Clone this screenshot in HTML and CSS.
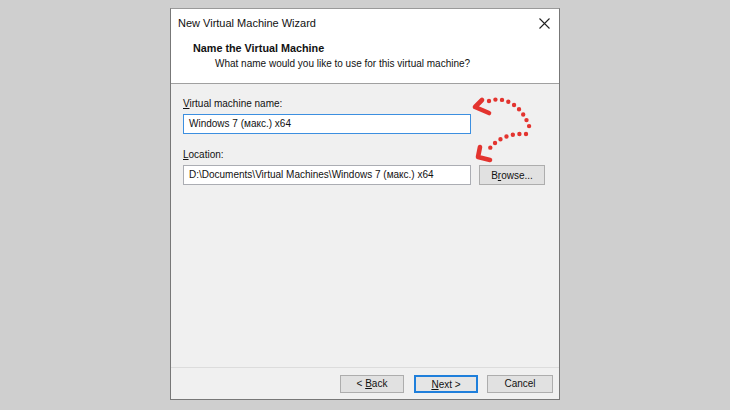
FILE: index.html
```html
<!DOCTYPE html>
<html lang="en">
<head>
  <meta charset="UTF-8" />
  <title>New Virtual Machine Wizard</title>
  <link rel="stylesheet" href="styles.css">
</head>
<body>
  <div class="dialog">
    <div class="titlebar">
      <span class="title">New Virtual Machine Wizard</span>
      <svg class="close" width="11" height="11" viewBox="0 0 11 11">
        <path d="M0.5 0.5 L10.5 10.5 M10.5 0.5 L0.5 10.5" stroke="#222" stroke-width="1.1" fill="none"/>
      </svg>
    </div>

    <div class="header">
      <div class="step">Name the Virtual Machine</div>
      <div class="step-sub">What name would you like to use for this virtual machine?</div>
    </div>

    <div class="content">
      <label class="field-label"><u>V</u>irtual machine name:</label>
      <div class="row">
        <div class="textbox focused">Windows 7 (макс.) x64</div>
      </div>

      <label class="field-label second"><u>L</u>ocation:</label>
      <div class="row">
        <div class="textbox">D:\Documents\Virtual Machines\Windows 7 (макс.) x64</div>
        <button class="btn browse">B<u>r</u>owse...</button>
      </div>

      <!-- red hint arrows pointing at both fields -->
      <svg class="hint" width="80" height="75" viewBox="0 0 80 75">
        <path d="M24 8 C 38 3, 58 10, 66 39" stroke="#e3342f" stroke-width="4.4" fill="none"
              stroke-linecap="round" stroke-dasharray="0 6.6"/>
        <path d="M61 41 C 48 40, 34 44, 25 55" stroke="#e3342f" stroke-width="4.4" fill="none"
              stroke-linecap="round" stroke-dasharray="0 6.6"/>
        <polyline points="17,7 10,14 24,20" stroke="#e3342f" stroke-width="4.6" fill="none"
                  stroke-linecap="round" stroke-linejoin="round"/>
        <polyline points="15,54 13,64 25,67" stroke="#e3342f" stroke-width="4.6" fill="none"
                  stroke-linecap="round" stroke-linejoin="round"/>
      </svg>
    </div>

    <div class="footer">
      <button class="btn">&lt; <u>B</u>ack</button>
      <button class="btn default"><u>N</u>ext &gt;</button>
      <button class="btn cancel">Cancel</button>
    </div>
  </div>
</body>
</html>
```

FILE: styles.css
```css
body {
  margin: 0;
  background: #cfcfcf;
  font-family: "Liberation Sans", Arial, sans-serif;
  font-size: 10px;
  color: #111;
}

.dialog {
  box-sizing: border-box;
  width: 390px;
  height: 392px;
  margin: 8px 0 0 170px;
  border: 1px solid #777;
  border-top-color: #9a9a9a;
  background: #f0f0f0;
  display: flex;
  flex-direction: column;
}

.titlebar {
  height: 28px;
  background: #fff;
  display: flex;
  align-items: center;
  justify-content: space-between;
  padding: 0 9px 0 7px;
}

.title {
  font-size: 11px;
  line-height: 15px;
}

.close {
  display: block;
  margin-top: 1px;
}

.header {
  height: 42px;
  background: #fff;
  border-bottom: 1px solid #a0a0a0;
  padding: 4px 0 0 22px;
}

.step {
  font-size: 10.8px;
  font-weight: bold;
  line-height: 15px;
}

.step-sub {
  line-height: 15px;
  padding-left: 22px;
}

.content {
  flex: 1;
  position: relative;
  padding: 12px 0 0 12px;
}

.field-label {
  display: block;
  line-height: 15px;
  margin-bottom: 3px;
}

.field-label.second {
  margin-top: 13px;
}

.row {
  display: flex;
  align-items: center;
  gap: 8px;
}

.textbox {
  box-sizing: border-box;
  width: 288px;
  height: 20px;
  line-height: 18px;
  padding: 0 5px;
  background: #fff;
  border: 1px solid #abadb3;
  white-space: nowrap;
  overflow: hidden;
}

.textbox.focused {
  border-color: #3c8fe0;
}

.btn {
  box-sizing: border-box;
  height: 18px;
  padding: 0;
  font-family: inherit;
  font-size: 10px;
  line-height: 15px;
  color: #111;
  background: #e1e1e1;
  border: 1px solid #adadad;
}

.btn.browse {
  width: 66px;
  height: 20px;
}

.hint {
  position: absolute;
  left: 294px;
  top: 9px;
}

.footer {
  height: 31px;
  border-top: 1px solid #dcdcdc;
  display: flex;
  align-items: center;
  justify-content: flex-end;
  gap: 10px;
  padding-right: 6px;
}

.footer .btn {
  width: 64px;
}

.btn.default {
  border: 2px solid #1f7fdb;
  background: #e5e5e5;
}

.btn.cancel {
  width: 66px;
  margin-left: -1px;
}
```
